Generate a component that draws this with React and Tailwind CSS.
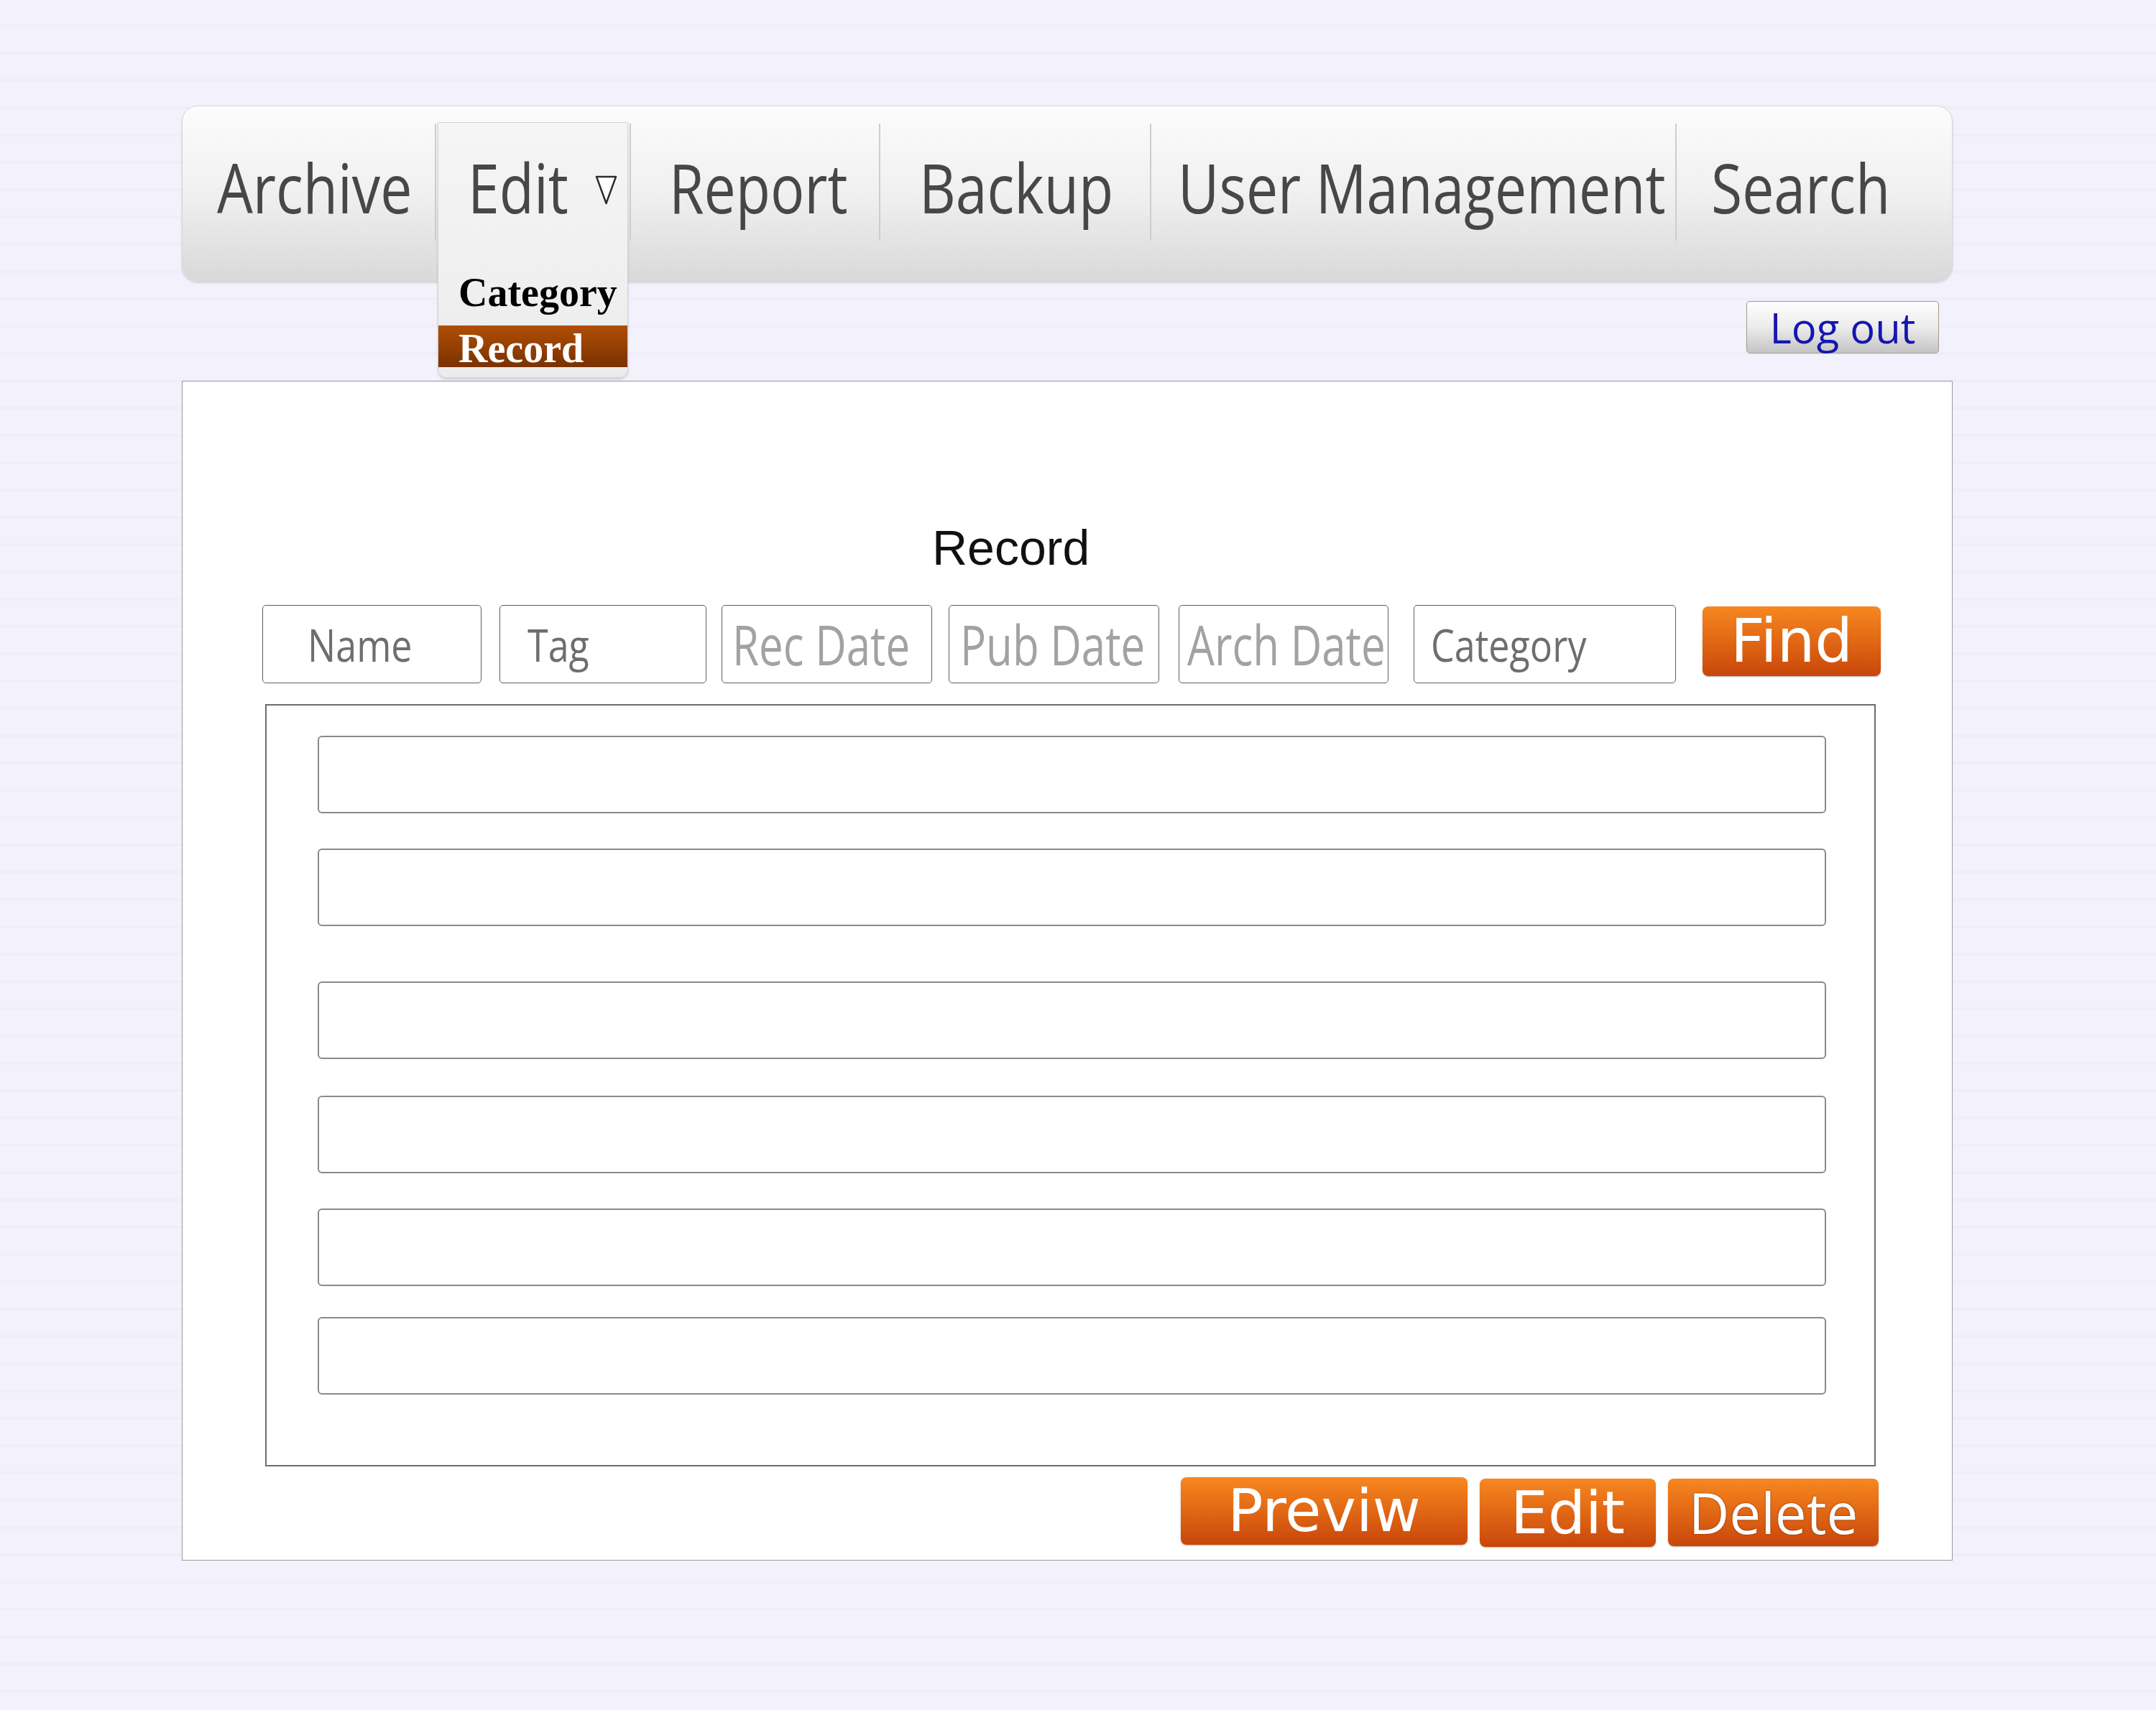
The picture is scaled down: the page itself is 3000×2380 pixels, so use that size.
import React from "react";

const navFont = "font-['Open_Sans',sans-serif]";

const navItems = [
  { label: "Archive", w: "w-[351px]", pl: "pl-[48px]" },
  { label: "Edit", w: "w-[269px]", pl: "pl-[44px]", dropdown: true },
  { label: "Report", w: "w-[345px]", pl: "pl-[53px]" },
  { label: "Backup", w: "w-[375px]", pl: "pl-[54px]" },
  { label: "User Management", w: "w-[729px]", pl: "pl-[37px]" },
  { label: "Search", w: "flex-1", pl: "pl-[48px]" },
];

const fields = [
  { label: "Name", box: "w-[305px]", pl: "pl-[62px]", big: false },
  { label: "Tag", box: "ml-[25px] w-[288px]", pl: "pl-[38px]", big: false },
  { label: "Rec Date", box: "ml-[21px] w-[293px]", pl: "pl-[14px]", big: true },
  { label: "Pub Date", box: "ml-[23px] w-[293px]", pl: "pl-[15px]", big: true },
  { label: "Arch Date", box: "ml-[27px] w-[292px]", pl: "pl-[11px]", big: true },
  { label: "Category", box: "ml-[35px] w-[365px]", pl: "pl-[23px]", big: false },
];

// vertical gaps between the list rows differ in the mockup
const rowGaps = ["mt-0", "mt-[49px]", "mt-[77px]", "mt-[51px]", "mt-[49px]", "mt-[43px]"];

function Divider() {
  return <div className="mt-[24px] h-[163px] w-[2px] shrink-0 bg-[#cdcdcd]" />;
}

function NavItem({ item }) {
  return (
    <div className={`relative flex shrink-0 items-start pt-[64px] ${item.w} ${item.pl}`}>
      {item.dropdown && (
        <div className="absolute left-[2px] top-[22px] z-0 flex h-[356px] w-[265px] flex-col justify-end rounded-b-[12px] border border-[#d4d4d4] bg-linear-to-b from-[#f5f5f5] to-[#ececec] pb-[14px] shadow-[0_2px_3px_rgba(0,0,0,0.15)]">
          <div className="mb-[17px] h-[58px] pl-[28px] font-['Liberation_Serif',serif] text-[56px] font-bold leading-[58px] text-black">
            Category
          </div>
          <div className="h-[58px] bg-linear-to-b from-[#b04e06] to-[#7a3200] pl-[28px] pt-[3px] font-['Liberation_Serif',serif] text-[56px] font-bold leading-[58px] text-white">
            Record
          </div>
        </div>
      )}
      <span
        className={`relative z-10 inline-block origin-left scale-x-[0.82] whitespace-nowrap text-[96px] leading-none text-[#474747] ${navFont}`}
      >
        {item.label}
      </span>
      {item.dropdown && (
        <svg className="relative z-10 ml-[6px] mt-[32px]" width="31" height="41" viewBox="0 0 31 41">
          <polygon points="2,2 29,2 15.5,39" fill="#ffffff" stroke="#2d2d2d" strokeWidth="2.5" strokeLinejoin="round" />
        </svg>
      )}
    </div>
  );
}

function OrangeButton({ className, textClass, children }) {
  return (
    <button
      type="button"
      className={`flex shrink-0 items-center justify-center rounded-[8px] bg-linear-to-b from-[#f8871f] to-[#c8460a] shadow-[0_1px_2px_rgba(0,0,0,0.3)] ${className}`}
    >
      <span className={`leading-none text-white ${textClass}`}>{children}</span>
    </button>
  );
}

export default function App() {
  return (
    <div className="min-h-screen w-full bg-[#f2f1fc] bg-[image:repeating-linear-gradient(180deg,#f2f1fc_0px,#f2f1fc_34px,#eeedf9_34px,#eeedf9_38px)] pl-[253px] pt-[147px]">
      <div className="w-[2464px]">
        {/* top menu */}
        <nav className="relative z-20 flex h-[245px] rounded-[22px] border border-[#d6d6d6] bg-linear-to-b from-[#fcfcfc] via-[#f0f0f0] to-[#d9d9d9] shadow-[0_2px_3px_rgba(0,0,0,0.12)]">
          {navItems.map((item, i) => (
            <React.Fragment key={item.label}>
              {i > 0 && <Divider />}
              <NavItem item={item} />
            </React.Fragment>
          ))}
        </nav>

        <div className="flex justify-end pr-[19px] pt-[27px]">
          <button
            type="button"
            className="flex h-[73px] w-[268px] items-center justify-center rounded-[5px] border border-[#a89888] bg-linear-to-b from-[#fefefe] via-[#ececec] to-[#c4c4c4]"
          >
            <span className={`text-[58px] leading-none text-[#1616b0] ${navFont}`}>Log out</span>
          </button>
        </div>

        {/* record panel */}
        <section className="mt-[38px] h-[1642px] border border-[#9a9a9a] bg-white pt-[197px]">
          <h1 className="pl-[1043px] font-['Liberation_Sans',Arial,sans-serif] text-[68px] font-normal leading-none text-[#111]">
            Record
          </h1>

          <div className="mt-[46px] flex items-start pl-[111px]">
            {fields.map((f) => (
              <div
                key={f.label}
                className={`flex h-[109px] shrink-0 items-center rounded-[5px] border border-[#5e5e5e] bg-white ${f.box} ${f.pl}`}
              >
                <span
                  className={`inline-block origin-left whitespace-nowrap leading-none ${navFont} ${
                    f.big ? "scale-x-[0.79] text-[76px] text-[#a2a2a2]" : "scale-x-[0.84] text-[62px] text-[#6e6e6e]"
                  }`}
                >
                  {f.label}
                </span>
              </div>
            ))}
            <OrangeButton
              className="ml-[37px] mt-[2px] h-[97px] w-[248px]"
              textClass="font-['DejaVu_Sans',sans-serif] text-[83px]"
            >
              Find
            </OrangeButton>
          </div>

          <div className="ml-[115px] mt-[29px] h-[1061px] w-[2241px] border-2 border-[#6c6c6c] pl-[71px] pt-[42px]">
            {rowGaps.map((gap, i) => (
              <div key={i} className={`h-[108px] w-[2099px] rounded-[6px] border-2 border-[#8a8a8a] ${gap}`} />
            ))}
          </div>

          <div className="ml-[1389px] mt-[15px] flex items-start">
            <OrangeButton className="h-[94px] w-[399px]" textClass="font-['DejaVu_Sans',sans-serif] text-[82px]">
              Previw
            </OrangeButton>
            <OrangeButton className="ml-[17px] mt-[2px] h-[95px] w-[245px]" textClass="font-['DejaVu_Sans',sans-serif] text-[82px]">
              Edit
            </OrangeButton>
            <OrangeButton
              className="ml-[17px] mt-[2px] h-[94px] w-[293px] from-[#ec7a22] to-[#c24a10]"
              textClass="font-['Open_Sans',sans-serif] text-[78px] text-[#fff8ea] [text-shadow:0_0_2px_rgba(90,30,0,0.9)]"
            >
              Delete
            </OrangeButton>
          </div>
        </section>
      </div>
    </div>
  );
}
